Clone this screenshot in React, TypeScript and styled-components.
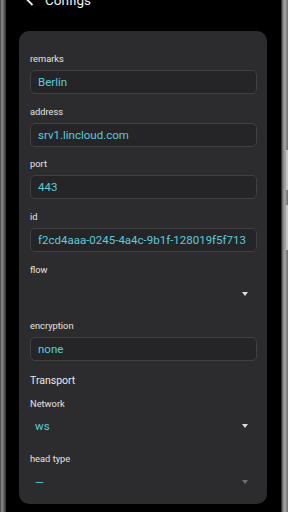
import styled, { createGlobalStyle } from 'styled-components'

const GlobalStyle = createGlobalStyle`
  html, body {
    margin: 0;
    padding: 0;
    background: #000;
  }
  body {
    font-family: Roboto, 'Noto Sans', Arial, sans-serif;
  }
`

// ── Device frame ──────────────────────────────────────────────────────────────

const Device = styled.div`
  display: flex;
  width: 288px;
  height: 512px;
  overflow: hidden;
  background: #000;
`

const Bezel = styled.div<{ $side: 'left' | 'right' }>`
  flex: 0 0 ${({ $side }) => ($side === 'left' ? '6px' : '7px')};
  position: relative;
  background: ${({ $side }) =>
    $side === 'left'
      ? 'linear-gradient(90deg, #3c3c3c 0%, #8a8a8a 30%, #6a6a6a 60%, #2a2a2a 100%)'
      : 'linear-gradient(90deg, #1a1a1a 0%, #7a7a7a 25%, #a8a8a8 55%, #6c6c6c 100%)'};
`

const SideButton = styled.div<{ $top: number; $height: number }>`
  position: absolute;
  right: 0;
  top: ${({ $top }) => $top}px;
  width: 2px;
  height: ${({ $height }) => $height}px;
  background: #c4c4c4;
`

const Screen = styled.div`
  flex: 1;
  display: flex;
  flex-direction: column;
  background: #000;
  min-width: 0;
`

// ── Header ────────────────────────────────────────────────────────────────────

const Header = styled.div`
  display: flex;
  align-items: center;
  gap: 11px;
  height: 20px;
  margin-top: -10px;
  padding-left: 20px;
  color: #f2f2f2;
`

const Title = styled.span`
  font-size: 13.5px;
  line-height: 20px;
`

// ── Card ──────────────────────────────────────────────────────────────────────

const Card = styled.div`
  margin: 21px 14px 0 13px;
  background: #2c2c2e;
  border-radius: 10px;
  padding: 21px 10px 8px 11px;
  display: flex;
  flex-direction: column;
`

const Field = styled.div<{ $gap?: number }>`
  display: flex;
  flex-direction: column;
  margin-bottom: ${({ $gap }) => $gap ?? 10.65}px;
`

const Label = styled.div`
  font-size: 9.3px;
  line-height: 14px;
  color: #e4e4e4;
  margin-bottom: 4px;
`

const Input = styled.div`
  height: 24px;
  box-sizing: border-box;
  border: 1px solid #414143;
  border-radius: 5px;
  background: #252527;
  padding: 0 7px;
  display: flex;
  align-items: center;
  font-size: 11.5px;
  color: #5ccbdb;
  white-space: nowrap;
  overflow: hidden;
`

const Select = styled.div`
  height: 28px;
  display: flex;
  align-items: center;
  justify-content: space-between;
  padding: 0 9px 0 5px;
  font-size: 11.5px;
  color: #5ccbdb;
`

const Arrow = styled.span<{ $dim?: boolean }>`
  width: 0;
  height: 0;
  border-left: 3.5px solid transparent;
  border-right: 3.5px solid transparent;
  border-top: 4px solid ${({ $dim }) => ($dim ? '#6e6e70' : '#dcdcdc')};
`

const Section = styled.div`
  font-size: 10.5px;
  line-height: 18px;
  color: #e8e8e8;
  margin-bottom: 7px;
`

const TEXT_FIELDS = [
  { label: 'remarks', value: 'Berlin' },
  { label: 'address', value: 'srv1.lincloud.com' },
  { label: 'port', value: '443' },
  { label: 'id', value: 'f2cd4aaa-0245-4a4c-9b1f-128019f5f713' },
]

export default function App() {
  return (
    <>
      <GlobalStyle />
      <Device>
        <Bezel $side="left" />
        <Screen>
          <Header>
            <svg width="8" height="12" viewBox="0 0 8 12">
              <path d="M6.5 1 L1.5 6 L6.5 11" fill="none" stroke="#f2f2f2" strokeWidth="1.8" />
            </svg>
            <Title>Configs</Title>
          </Header>

          <Card>
            {TEXT_FIELDS.map(f => (
              <Field key={f.label}>
                <Label>{f.label}</Label>
                <Input>{f.value}</Input>
              </Field>
            ))}

            <Field $gap={11}>
              <Label style={{ marginBottom: 3 }}>flow</Label>
              <Select>
                <span />
                <Arrow />
              </Select>
            </Field>

            <Field $gap={11}>
              <Label>encryption</Label>
              <Input>none</Input>
            </Field>

            <Section>Transport</Section>

            <Field $gap={12}>
              <Label style={{ marginBottom: 1 }}>Network</Label>
              <Select>
                <span>ws</span>
                <Arrow />
              </Select>
            </Field>

            <Field $gap={0}>
              <Label style={{ marginBottom: 2 }}>head type</Label>
              <Select>
                <span>—</span>
                <Arrow $dim />
              </Select>
            </Field>
          </Card>
        </Screen>
        <Bezel $side="right">
          <SideButton $top={150} $height={40} />
          <SideButton $top={205} $height={45} />
        </Bezel>
      </Device>
    </>
  )
}
